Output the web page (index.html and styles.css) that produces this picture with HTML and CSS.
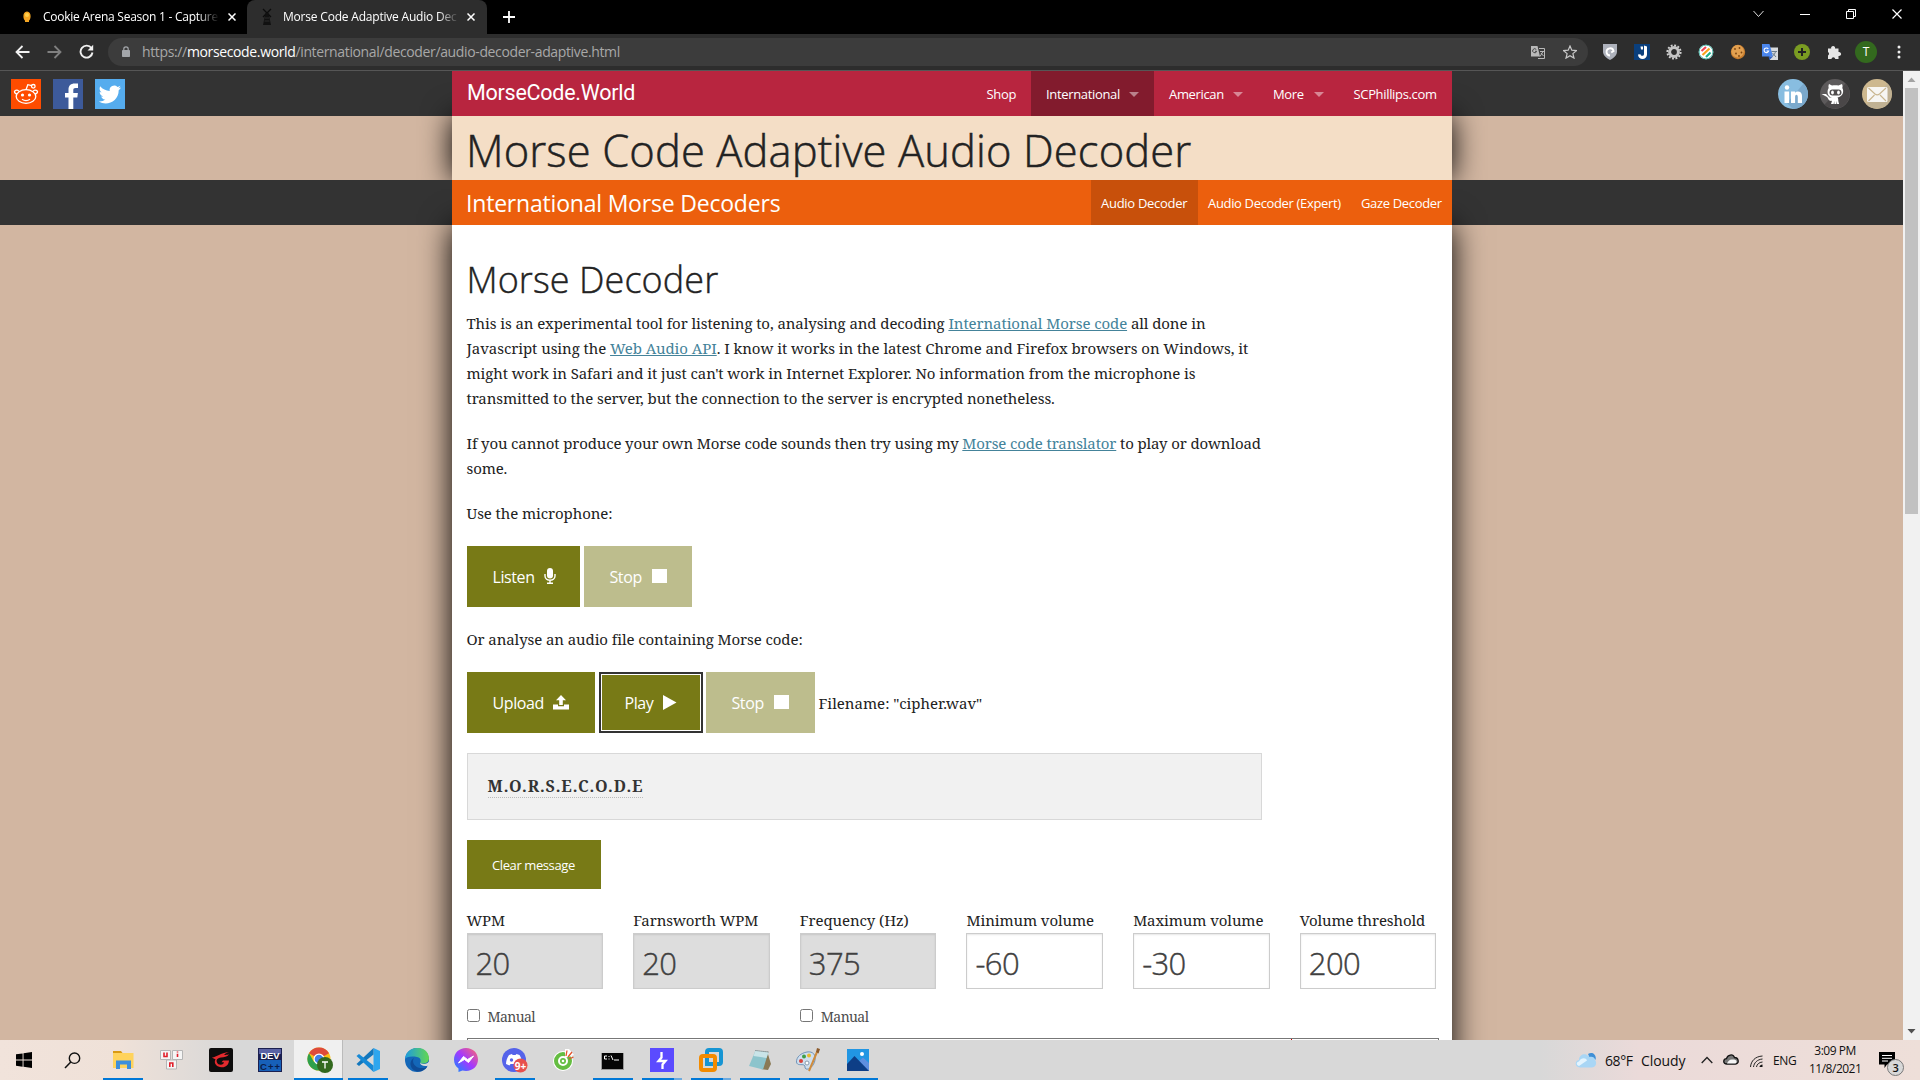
FILE: index.html
```
<!DOCTYPE html>
<html lang="en">
<head>
<meta charset="utf-8">
<title>Morse Code Adaptive Audio Decoder</title>
<link rel="stylesheet" href="styles.css">
</head>
<body>
<div class="tabs">
  <div class="tab">
    <svg class="fav" width="16" height="16" viewBox="0 0 16 16"><path d="M8 2.500c2.600 0 3.600 2.200 3.600 4.800 0 2.400-.8 3.700-1.600 4.200v1.500H6v-1.500c-.8-.5-1.600-1.800-1.600-4.200C4.400 4.700 5.400 2.500 8 2.500z" fill="#f5a623"/><circle cx="8" cy="6" r="2" fill="#ffd04d"/></svg>
    <span class="tab-title t1">Cookie Arena Season 1 - Capture</span>
    <svg width="8" height="8" viewBox="0 0 8 8"><path d="M.5.5l7 7M7.500.5l-7 7" stroke="#fff" stroke-width="1.500"/></svg>
  </div>
  <div class="tab active">
    <svg class="fav" width="16" height="18" viewBox="0 0 16 18"><path d="M4 1l8 8M12 1L4 9" stroke="#0c0c0c" stroke-width="1.300"/><path d="M6.500 5h3L12 17H4z" fill="#111"/><path d="M6 10h4M5.500 13h5" stroke="#333" stroke-width=".8"/></svg>
    <span class="tab-title t2">Morse Code Adaptive Audio Dec</span>
    <svg width="9" height="8" viewBox="0 0 9 8"><path d="M.5.5l7 7M7.500.5l-7 7" stroke="#fff" stroke-width="1.500"/></svg>
  </div>
  <svg class="plus" width="12" height="12" viewBox="0 0 12 12"><path d="M6 0v12M0 6h12" stroke="#fff" stroke-width="1.800"/></svg>
  <div class="winbtns">
    <svg width="11" height="12" viewBox="0 0 11 12"><path d="M.5 3l5 5.500 5-5.500" fill="none" stroke="#ddd"/></svg>
    <svg width="10" height="12" viewBox="0 0 10 12"><path d="M0 6.500h10" stroke="#fff"/></svg>
    <svg width="10" height="12" viewBox="0 0 10 12"><path d="M.5 3.500h7v7h-7zM2.500 3.500v-2h7v7h-2" fill="none" stroke="#fff"/></svg>
    <svg width="10" height="12" viewBox="0 0 10 12"><path d="M.5 1.500l9 9M9.500 1.500l-9 9" stroke="#fff" stroke-width="1.200"/></svg>
  </div>
</div>
<div class="toolbar">
  <div class="navbtns">
    <svg width="15" height="14" viewBox="0 0 15 14"><path d="M14.500 7H2M7.500 1L1.500 7l6 6" fill="none" stroke="#f1f1f1" stroke-width="1.800"/></svg>
    <svg width="15" height="14" viewBox="0 0 15 14"><path d="M.5 7H13M7.500 1l6 6-6 6" fill="none" stroke="#808080" stroke-width="1.800"/></svg>
    <svg width="15" height="15" viewBox="0 0 15 15"><path d="M12.500 4.200A6 6 0 1 0 13.500 8.500" fill="none" stroke="#f1f1f1" stroke-width="1.900"/><path d="M14.200.8v5.700H8.500z" fill="#f1f1f1"/></svg>
  </div>
  <div class="omni">
    <svg width="8" height="11" viewBox="0 0 8 11"><rect y="4" width="8" height="7" rx=".8" fill="#a3a6aa"/><path d="M1.800 4.500V3a2.200 2.200 0 0 1 4.400 0v1.500" fill="none" stroke="#a3a6aa" stroke-width="1.200"/></svg>
    <span class="url">https://<b>morsecode.world</b>/international/decoder/audio-decoder-adaptive.html</span>
    <svg width="14" height="14" viewBox="0 0 14 14"><path d="M0 1h6.500L9 11.500H0z" fill="#b9b9b9"/><path d="M8 3.500h5.500v10H7" fill="none" stroke="#b9b9b9"/><path d="M5.300 4.600A2 2 0 1 0 5.600 6.300H4" fill="none" stroke="#444"/><path d="M9 6.500h4M12 6.500l-3 5M10 8l2.500 3" stroke="#b9b9b9"/></svg>
    <svg width="14" height="14" viewBox="0 0 14 14"><path d="M7 1l1.800 4.200 4.600.4-3.500 3 1.100 4.500L7 10.700l-4 2.400 1.100-4.500-3.500-3 4.600-.4z" fill="none" stroke="#c8c8c8" stroke-width="1.200"/></svg>
  </div>
  <div class="exts">
    <svg viewBox="0 0 16 16"><path d="M1 0h14v7.500c0 4-3.500 6.500-7 8.500C4.500 14 1 11.500 1 7.500z" fill="#adb1bb"/><path d="M8 11.500A3.600 3.600 0 1 1 11.600 7L9.200 8.600" fill="none" stroke="#fff" stroke-width="1.800"/></svg>
    <svg viewBox="0 0 16 16"><path d="M0 0h16v16H0z" fill="#0a3f7d"/><path d="M6.500 2.500h2.500v3H7zM10 1.500l3 1v8a4.500 4.500 0 0 1-9 0l2.500-.3c.3 2.300 3.500 2.200 3.500-.3z" fill="#fff"/></svg>
    <svg viewBox="0 0 16 16"><circle cx="8" cy="8" r="6.600" fill="none" stroke="#d0d0d0" stroke-width="2" stroke-dasharray="1.900 1.550"/><circle cx="8" cy="8" r="4.400" fill="none" stroke="#c4c4c4" stroke-width="3"/></svg>
    <svg viewBox="0 0 16 16"><circle cx="8" cy="8" r="7.300" fill="#fff"/><circle cx="8" cy="8" r="6.900" fill="none" stroke="#2a9" stroke-width=".8"/><path d="M3.500 7L8 3" stroke="#ef4657" stroke-width="2.200"/><path d="M4.500 11l7-6.500" stroke="#f9a11b" stroke-width="2.200"/><path d="M8 13l4.500-4.500" stroke="#1cb28a" stroke-width="2.200"/></svg>
    <svg viewBox="0 0 16 16"><circle cx="8" cy="8" r="7.200" fill="#c87d2e"/><circle cx="7.600" cy="7.300" r="6.200" fill="#e2a050"/><g fill="#7b4310"><circle cx="5" cy="5" r=".9"/><circle cx="9.500" cy="4" r=".9"/><circle cx="11.500" cy="8.500" r=".9"/><circle cx="6" cy="9.500" r=".9"/><circle cx="9" cy="12" r=".9"/></g></svg>
    <svg viewBox="0 0 16 16"><path d="M6 3.500h10V16H8z" fill="#d7dadd"/><path d="M0 0h7.500l3.500 12.500H0z" fill="#4a86ee"/><path d="M7.500 16l3.500-3.500H6.500z" fill="#2f5fc0"/><path d="M6.300 5A2.300 2.300 0 1 0 6.600 7H4.500" fill="none" stroke="#fff" stroke-width="1.100"/><path d="M9.500 7.500H15M13.500 7.500c-.5 2.200-1.500 3.500-3 4.800M10.500 9l3.500 4" stroke="#6b7d8c" fill="none"/></svg>
    <svg viewBox="0 0 16 16"><circle cx="8" cy="8" r="8" fill="#7a9c22"/><path d="M8 4v8M4 8h8" stroke="#222" stroke-width="2"/></svg>
    <svg viewBox="0 0 16 16"><path d="M2 4.500h3.200a2 2 0 1 1 3.800 0h3.500v3.600a2 2 0 1 1 0 3.800v3H9.300a2 2 0 0 0-3.900 0H2v-3.500a2 2 0 0 0 0-3.500z" fill="#e6e6e6"/></svg>
  </div>
  <span class="avatar">T</span>
  <svg width="4" height="14" viewBox="0 0 4 14"><g fill="#eee"><circle cx="2" cy="2" r="1.500"/><circle cx="2" cy="7" r="1.500"/><circle cx="2" cy="12" r="1.500"/></g></svg>
</div>
<div class="viewport">
  <div class="page">
    <div class="band">
      <div class="social">
        <svg width="30" height="30" viewBox="0 0 30 30"><path d="M0 0h30v30H0z" fill="#ff4c00"/><g fill="none" stroke="#fff" stroke-width="1.300"><ellipse cx="15" cy="17.500" rx="9.800" ry="6.800"/><path d="M15 10.700l1.800-5 4 .9"/><circle cx="22.300" cy="7.300" r="1.800"/><path d="M5.800 15c-2-.5-3-2-1.800-3.200s3-.8 4 .5M24.200 15c2-.5 3-2 1.800-3.200s-3-.8-4 .5M11 20.300c2.500 1.700 5.500 1.700 8 0"/></g><circle cx="11.500" cy="16" r="1.600" fill="#fff"/><circle cx="18.500" cy="16" r="1.600" fill="#fff"/></svg>
        <svg width="30" height="30" viewBox="0 0 30 30"><path d="M0 0h30v30H0z" fill="#3d5a9a"/><path d="M15.500 30V18.500H12V14h3.500v-3.500C15.500 6.500 18 4.500 21.500 4.500H25V9h-2.300c-1.900 0-2.400.9-2.400 2.300V14h4.600l-.6 4.500h-4V30z" fill="#fff"/></svg>
        <svg width="30" height="30" viewBox="0 0 30 30"><path d="M0 0h30v30H0z" fill="#55acee"/><path d="M26 8.500c-.8.400-1.700.6-2.600.7.900-.5 1.600-1.400 2-2.400-.9.500-1.900.9-2.900 1.100a4.600 4.600 0 0 0-7.800 4.100C10.900 11.800 7.500 10 5.200 7.200c-1.200 2.100-.6 4.800 1.400 6.100-.7 0-1.400-.2-2-.6 0 2.200 1.500 4.200 3.600 4.600-.7.200-1.400.2-2 .1.600 1.800 2.300 3.100 4.200 3.200A9.200 9.200 0 0 1 3.700 22.500c8.500 5 20-.3 20-11.300 1-.7 1.700-1.600 2.300-2.700z" fill="#fff"/></svg>
      </div>
      <div class="nav">
        <span class="logo">MorseCode.World</span>
        <span class="ni w1">Shop</span>
        <span class="ni w2 on">International<i></i></span>
        <span class="ni w3">American<i></i></span>
        <span class="ni w4">More<i></i></span>
        <span class="ni w5">SCPhillips.com</span>
      </div>
      <div class="social right">
        <svg width="30" height="30" viewBox="0 0 30 30"><circle cx="15" cy="15" r="15" fill="#88bde0"/><path d="M25.600 4.400A15 15 0 0 1 15 30L9 24z" fill="#7ba9cc"/><circle cx="9" cy="8.500" r="2.200" fill="#fff"/><path d="M6.500 12.500h4.600V24H6.500zM13 12.500h4v1.300c2-2.300 7-1.900 7 3V24h-4.200v-6c0-3-2.700-2.800-2.700 0v6H13z" fill="#fff"/></svg>
        <svg width="30" height="30" viewBox="0 0 30 30"><circle cx="15" cy="15" r="15" fill="#5d5a5b"/><path d="M25.600 4.400A15 15 0 0 1 4.400 25.600z" fill="#4a4748"/><path d="M9 5l3 1.600c2-.5 4.500-.5 6.500 0L22 5c.8 2 .6 3 .3 4 2 3.500.7 8.500-4.800 9.500.8 1 .8 2 .8 3.500l.8 3h-2l-.5-3-.2 3h-2l-.2-3-.5 3H11l1-3.200c-3.500.5-3-1.500-5-3.800L1.500 15H6l3.500 3.500 2.500.5C7.500 17.500 6.500 12.500 8.700 9c-.4-1.300-.3-2.500.3-4z" fill="#fff"/><rect x="9.500" y="10.500" width="12" height="6" rx="3" fill="#514e4f"/><ellipse cx="12.500" cy="13.500" rx="1.400" ry="2" fill="#fff"/><ellipse cx="18.500" cy="13.500" rx="1.400" ry="2" fill="#fff"/></svg>
        <svg width="30" height="30" viewBox="0 0 30 30"><circle cx="15" cy="15" r="15" fill="#cdb88f"/><path d="M25.600 4.400A15 15 0 0 1 4.400 25.600z" fill="#c0b193"/><rect x="5" y="8" width="20.500" height="15" rx="1.500" fill="#f7f6f3"/><path d="M6.500 9l6.500 6c1.500 1.200 3 1.200 4.500 0L24 9M6.500 22l6-6M24 22l-6-6" fill="none" stroke="#c9b68f" stroke-width="1.100"/></svg>
      </div>
    </div>
    <h1>Morse Code Adaptive Audio Decoder</h1>
    <div class="band">
      <div></div>
      <div class="nav sub">
        <span class="subtitle">International Morse Decoders</span>
        <span class="si s1 on">Audio Decoder</span>
        <span class="si s2">Audio Decoder (Expert)</span>
        <span class="si s3">Gaze Decoder</span>
      </div>
    </div>
    <div class="content">
      <h2>Morse Decoder</h2>
      <p>This is an experimental tool for listening to, analysing and decoding <a>International Morse code</a> all done in<br><span class="l2">Javascript using the <a>Web Audio API</a>. I know it works in the latest Chrome and Firefox browsers on Windows, it</span><br>might work in Safari and it just can't work in Internet Explorer. No information from the microphone is<br>transmitted to the server, but the connection to the server is encrypted nonetheless.</p>
      <p class="p2">If you cannot produce your own Morse code sounds then try using my <a>Morse code translator</a> to play or download<br>some.</p>
      <p>Use the microphone:</p>
      <div class="row">
        <span class="btn b1">Listen<svg width="12" height="16" viewBox="0 0 12 16"><rect x="3" width="6" height="10.500" rx="3" fill="#fff"/><path d="M1 6v2c0 5.500 10 5.500 10 0V6M6 12v3M3 15.200h6" fill="none" stroke="#fff" stroke-width="1.400"/></svg></span>
        <span class="btn b2 off">Stop<svg width="15" height="14" viewBox="0 0 15 14"><path d="M0 0h15v14H0z" fill="#fff"/></svg></span>
      </div>
      <p>Or analyse an audio file containing Morse code:</p>
      <div class="row">
        <span class="btn b3">Upload<svg width="16" height="15" viewBox="0 0 16 15"><path d="M8 0l5 5.200H9.800V10H6.200V5.200H3zM0 9.500h5v1.700h6V9.500h5V14.500H0z" fill="#fff"/></svg></span>
        <span class="btn b4">Play<svg width="14" height="15" viewBox="0 0 14 15"><path d="M0 0l13.500 7.500L0 15z" fill="#fff"/></svg></span>
        <span class="btn b5 off">Stop<svg width="15" height="14" viewBox="0 0 15 14"><path d="M0 0h15v14H0z" fill="#fff"/></svg></span>
        <span class="file">Filename: "cipher.wav"</span>
      </div>
      <div class="msg"><b>M.O.R.S.E.C.O.D.E</b></div>
      <span class="btn small">Clear message</span>
      <div class="fields">
        <div><label>WPM</label><div class="in dis">20</div><div class="chk"><i></i>Manual</div></div>
        <div><label>Farnsworth WPM</label><div class="in dis">20</div></div>
        <div><label>Frequency (Hz)</label><div class="in dis">375</div><div class="chk"><i></i>Manual</div></div>
        <div><label>Minimum volume</label><div class="in">-60</div></div>
        <div><label>Maximum volume</label><div class="in">-30</div></div>
        <div><label>Volume threshold</label><div class="in">200</div></div>
      </div>
      <div class="graph"><i></i></div>
    </div>
  </div>
  <div class="scroll">
    <svg width="17" height="17" viewBox="0 0 17 17"><path d="M4.500 11l4-4.500 4 4.500z" fill="#a3a3a3"/></svg>
    <div class="thumb"></div>
    <svg width="17" height="17" viewBox="0 0 17 17"><path d="M4.500 6l4 4.500 4-4.500z" fill="#505050"/></svg>
  </div>
</div>
<div class="taskbar">
  <div class="tb"><svg width="16" height="16" viewBox="0 0 16 16"><path d="M0 2.300L6.600 1.400v6.200H0zM7.500 1.200L16 0v7.600H7.500zM0 8.500h6.600v6.200L0 13.700zM7.500 8.500H16V16l-8.500-1.200z" fill="#000"/></svg></div>
  <div class="tb"><svg width="17" height="17" viewBox="0 0 17 17"><circle cx="10.500" cy="6.200" r="5.200" fill="none" stroke="#111" stroke-width="1.400"/><path d="M6.800 10L1 16" stroke="#111" stroke-width="1.500"/></svg></div>
  <div class="tb u"><svg width="22" height="18" viewBox="0 0 22 18"><path d="M1 0h8l1.500 2H1z" fill="#d99a13"/><path d="M1 2h20.500v15H1z" fill="#ffd35c"/><path d="M4 18V9.500h15V18h-4v-4.500H8V18z" fill="#3d8fdc"/></svg></div>
  <div class="tb"><svg width="24" height="20" viewBox="0 0 24 20"><g fill="#f5f5f5" stroke="#b5b5b5"><path d="M.5.5h10v9H.5zM12.500.5h10v9h-10zM6.500 10h10v9h-10z"/></g><g stroke="#e11f2b" stroke-width="1.600" fill="none"><path d="M4 2.500v4h3v-4M17.500 3.700v3.300M17.500 1.500v1M9.800 17v-4h3v4"/></g></svg></div>
  <div class="tb"><svg width="24" height="24" viewBox="0 0 24 24"><rect width="24" height="24" rx="2" fill="#0d0d0d"/><path d="M3 9.500C8 9 11 5 20 4c-3 1.200-4.500 2-5 2.800 2 .3 4-.2 5-.3-2 2.300-5 2.600-8 3-4 .6-5 2.500-4 5 1 2.500 4.500 3 6.500 1l.5-1.200h-2.500l1.500-1.800h6c-.5 5-3.500 7-7.500 6.700C8 19 5 16 6 12.500l.5-1.200c-1-.4-2-.8-3.500-1.800z" fill="#e32a2e"/></svg></div>
  <div class="tb"><svg width="24" height="24" viewBox="0 0 24 24"><path d="M0 0h24v24H0z" fill="#1b2050"/><path d="M1 12h22v11H1z" fill="#1760b8"/><path d="M1 1h22v5H1z" fill="#5a62a5"/><text x="2.500" y="11" textLength="19" class="dev">DEV</text><text x="2" y="21.500" textLength="20" class="dev cpp">C++</text></svg></div>
  <div class="tb u cur"><svg width="26" height="26" viewBox="0 0 26 26"><circle cx="12" cy="12" r="11.500" fill="#fbc116"/><path d="M12 12L2 6.200A11.500 11.500 0 0 1 22 6.200z" fill="#de4b3b"/><path d="M2 6.200A11.500 11.500 0 0 0 12 23.500l5-8.500L7 15z" fill="#2ea04c"/><circle cx="12" cy="12" r="5.500" fill="#fff"/><circle cx="12" cy="12" r="4.300" fill="#4080e8"/><circle cx="18" cy="18" r="8" fill="#33691e"/><path d="M15 15h6M18 15v6.500" stroke="#fff" stroke-width="1.300"/></svg></div>
  <div class="tb u"><svg width="24" height="24" viewBox="0 0 24 24"><path d="M17.500 0L24 3v18l-6.500 3z" fill="#2ea6ee"/><path d="M17.500 0v6.500L3 18 .5 16z" fill="#1277bd"/><path d="M17.500 24v-6.500L3 6 .5 8z" fill="#1689d6"/></svg></div>
  <div class="tb"><svg width="24" height="24" viewBox="0 0 24 24"><defs><linearGradient id="eg" x1="0" x2="1"><stop offset="0" stop-color="#1e9ae0"/><stop offset="1" stop-color="#63d84f"/></linearGradient></defs><circle cx="12" cy="12" r="12" fill="#1467b8"/><path d="M0 11C1-3.500 23-4 24 10c0 5-5 6.500-9 5 1.500-2.500.5-5.500-3-6C6 8 1 9 0 11z" fill="url(#eg)"/><path d="M9 10c-3 4 1 11 9 10 2 0 3-.7 4.500-1.500-5 8-16 6-17-2C5.200 13.500 7 11 9 10z" fill="#0f4c97"/><path d="M24.500 12c-.5 4-5.500 5-9.500 3 0 2 4 4 8.500 2.500 1-1.500 1.300-3.500 1-5.500z" fill="#dadada"/></svg></div>
  <div class="tb"><svg width="24" height="24" viewBox="0 0 24 24"><defs><linearGradient id="mg" x1="0" y1="1" x2="1" y2="0"><stop offset="0" stop-color="#0a8cff"/><stop offset=".5" stop-color="#a338ff"/><stop offset="1" stop-color="#ff6a6a"/></linearGradient></defs><path d="M12 0c7 0 12 5 12 11.500S19 23 12 23c-1.500 0-2.500-.2-3.500-.5L4.500 24v-3.500C1.500 18.500 0 15.500 0 11.500 0 5 5 0 12 0z" fill="url(#mg)"/><path d="M4.500 15L9.500 8.500l4 3L19.500 8l-5 6.500-4-3z" fill="#fff" stroke="#fff"/></svg></div>
  <div class="tb u"><svg width="26" height="25" viewBox="0 0 26 25"><circle cx="12" cy="12" r="12" fill="#5563ea"/><path d="M7 7l3-1 .6 1h3L14.500 6l3 1c2 3 2.500 6 2.500 9l-3.500 1.500-1-1.500h-7l-1 1.500L4 16c0-3 1-6 3-9z" fill="#fff"/><circle cx="9.500" cy="12" r="1.700" fill="#5563ea"/><circle cx="18.500" cy="17.500" r="7" fill="#e8504d"/><text x="12.800" y="21.500" class="nine">9+</text></svg></div>
  <div class="tb"><svg width="22" height="22" viewBox="0 0 22 22"><circle cx="10" cy="12" r="7.500" fill="none" stroke="#fff" stroke-width="5"/><circle cx="10" cy="12" r="7" fill="#fff" stroke="#65bd42" stroke-width="4"/><circle cx="10" cy="12" r="3" fill="#65bd42"/><circle cx="10" cy="12" r="1.300" fill="#fff"/><path d="M12 9V0h4l5 6z" fill="#fff"/><path d="M13 7l1-5.500M15 8l4-5M16 10l4.500-2" stroke="#e6532c" stroke-width="1.300"/></svg></div>
  <div class="tb u"><svg width="23" height="19" viewBox="0 0 23 19"><path d="M0 0h23v19H0z" fill="#999"/><path d="M1 2h21v16H1z" fill="#050505"/><path d="M0 0h23v2H0z" fill="#d5d5d5"/><path d="M6 5H3.500v3H6M8 5v1M8 7.500v1M10 4.500l2 4.500M13 9h5" fill="none" stroke="#fff"/></svg></div>
  <div class="tb u m"><svg width="24" height="24" viewBox="0 0 24 24"><path d="M0 0h24v24H0z" fill="#5b4bff"/><path d="M11.500 4v5.500L8.500 13h7L12.500 16.500V21" fill="none" stroke="#fff" stroke-width="2.300"/></svg></div>
  <div class="tb u m"><svg width="24" height="24" viewBox="0 0 24 24"><rect x="8" y="2" width="14" height="14" rx="2" fill="none" stroke="#1695d3" stroke-width="4"/><rect x="2" y="8" width="14" height="14" rx="2" fill="none" stroke="#f38b00" stroke-width="4"/><path d="M8 10v6h6" fill="none" stroke="#1695d3" stroke-width="4"/></svg></div>
  <div class="tb u"><svg width="24" height="22" viewBox="0 0 24 22"><path d="M19 2l4 13-3 6-7-1z" fill="#8a7a55"/><path d="M7.500 1.500L20.500 3 15 20.500 1 17z" fill="#8cc4cc"/><path d="M7.500 1.500L20.500 3l-2 6-13-2z" fill="#c9e4e8"/><path d="M7.500 1.500L20.500 3" stroke="#666" stroke-dasharray="1 1"/></svg></div>
  <div class="tb u"><svg width="25" height="24" viewBox="0 0 25 24"><path d="M11 4c6-1 9 3 8 8-1 6-6 10-9 9-2-1 0-3-2-4s-7 1-7.500-3C.3 9 5 5 11 4z" fill="#cfdfee" stroke="#6f93b8"/><circle cx="5" cy="13" r="2" fill="#d8433a"/><circle cx="8" cy="8.500" r="2" fill="#3f9e48"/><circle cx="13" cy="7.500" r="2" fill="#e8b92f"/><circle cx="11" cy="15" r="2" fill="#fff" stroke="#89a"/><path d="M21 4L13 23" stroke="#cf8b3c" stroke-width="2"/><path d="M20 4l1-4 3 1-1.500 4.500z" fill="#8c5a2b"/></svg></div>
  <div class="tb u"><svg width="22" height="22" viewBox="0 0 22 22"><path d="M0 0h22v22H0z" fill="#2196e3"/><circle cx="15" cy="5" r="2" fill="#fff"/><path d="M10 14l6-5.500 6 5.500v8h-8z" fill="#5f8fe0"/><path d="M0 15L7.500 7 22 22H0z" fill="#0d3e86"/></svg></div>
  <div class="tray">
    <svg width="22" height="16" viewBox="0 0 22 16"><path d="M5 15.500c-5 0-6-6.500-1-7.500C4 2 11 1 13 4c4-3 8 0 7 4 2 2 1.500 7-3 7.500z" fill="#a9d6f5"/><path d="M13 2c4-3 9 .5 7.500 6-1-3-3.500-4-6-3z" fill="#3f8fd6"/><path d="M4 14c-3-1-3-4 0-4.500 2-4 7-4 8-1" fill="#e4f4fe"/></svg>
    <span class="t68">68°F</span><span class="cl">Cloudy</span>
    <svg class="chev" width="12" height="8" viewBox="0 0 12 8"><path d="M.7 7L6 1.500 11.300 7" fill="none" stroke="#222" stroke-width="1.300"/></svg>
    <svg class="od" width="16" height="11" viewBox="0 0 16 11"><path d="M4 10C-.5 10 0 5 3.500 4.700 4.500.5 10-.5 11.500 3.500 16 3.500 16.500 10 12.500 10z" fill="#777" stroke="#111" stroke-width="1.300"/><path d="M4 9.500C5 7 7 5 9.500 5.500 13 5 15 7.500 12.500 9.500z" fill="#f5f5f5"/></svg>
    <svg class="wf" width="13" height="13" viewBox="0 0 13 13"><g fill="none" stroke="#222"><path d="M.5 12C1 6 5 1.500 12.500 1M3.500 12c.5-4 3.500-7.500 9-8M6.500 12c.3-2.500 2.500-4.800 6-5"/></g><path d="M9.500 12c0-1.500 1.500-2.500 3-2.500V12z" fill="#111"/></svg>
    <span class="eng">ENG</span>
    <span class="clock">3:09 PM<br>11/8/2021</span>
    <span class="note"><svg width="16" height="16" viewBox="0 0 16 16"><path d="M0 0h16v12.500H8L5.500 16v-3.500H0z" fill="#000"/><path d="M3 3.500h10M3 6.300h10M3 9h6" stroke="#fff"/></svg><em>3</em></span>
  </div>
</div>
</body>
</html>
```
FILE: styles.css
```
* { box-sizing: border-box; }
html, body { margin: 0; height: 1080px; overflow: hidden; }
body { display: flex; flex-direction: column; width: 1920px; font-family: "Open Sans", "Noto Sans", sans-serif; background: #fff; }
svg { display: block; flex: none; }

/* browser chrome */
.tabs { display: flex; height: 34px; background: #000; align-items: center; color: #fff; font-size: 12px; letter-spacing: -.2px; }
.tab { display: flex; align-items: center; height: 34px; width: 247px; padding-left: 19px; }
.tab.active { background: #2d2d2d; border-radius: 8px 8px 0 0; width: 240px; padding-left: 12px; }
.fav { margin-right: 8px; }
.tab-title { white-space: nowrap; line-height: 20px; -webkit-mask-image: linear-gradient(90deg, #000 88%, transparent); mask-image: linear-gradient(90deg, #000 88%, transparent); }
.t1 { width: 176px; margin-right: 9px; letter-spacing: -.25px; }
.t2 { width: 176px; margin-right: 8px; }
.plus { margin-left: 16px; }
.winbtns { display: flex; gap: 36px; margin-left: auto; padding-right: 18px; margin-bottom: 6px; align-items: center; }
.toolbar { display: flex; align-items: center; height: 37px; padding-bottom: 1px; background: #2d2d2d; border-bottom: 1px solid #565656; }
.navbtns { display: flex; gap: 17px; padding-left: 14.500px; width: 108px; align-items: center; }
.omni { display: flex; align-items: center; width: 1480px; height: 28px; border-radius: 14px; background: #3c3c3c; padding: 0 11px 0 14px; }
.url { flex: 1; margin-left: 12px; font-size: 14px; letter-spacing: -.36px; color: #a8a8a8; line-height: 20px; }
.url b { font-weight: 400; color: #fff; }
.omni svg + svg { margin-left: 18px; }
.exts { display: flex; gap: 16px; margin-left: 14px; }
.exts svg { width: 16px; height: 16px; }
.avatar { width: 22px; height: 22px; border-radius: 50%; background: #33691e; color: #fff; font-size: 12px; line-height: 22px; text-align: center; margin: 0 20px 0 13px; }

/* web page */
.viewport { display: flex; height: 969px; overflow: hidden; flex: none; }
.page { width: 1903px; background: #d2b6a1; overflow: hidden; }
.band { display: grid; grid-template-columns: 452px 1000px 451px; height: 45px; background: #333; }
.social { display: flex; gap: 12px; padding: 8px 11px; }
.social.right { justify-content: flex-end; }
.nav { display: flex; height: 45px; background: #b8253f; color: #fff; font-size: 13px; letter-spacing: -.34px; line-height: 46px; position: relative; white-space: nowrap; }
.logo { font: 21.500px/43px Roboto, sans-serif; letter-spacing: -.25px; flex: 1; padding-left: 15px; }
.ni { padding-left: 15px; display: flex; align-items: center; justify-content: space-between; padding-right: 15px; }
.ni i { border: 5px solid transparent; border-top-color: rgba(255,255,255,.45); border-bottom: 0; margin-top: 1px; }
.w1 { width: 59px; } .w2 { width: 123px; } .w3 { width: 104px; } .w4 { width: 81px; } .w5 { width: 113px; padding-right: 0; }
.w1, .w5 { padding-left: 14.500px; }
.ni.on { background: #821b2d; }
.sub { background: #ec5f0d; }
.subtitle { flex: 1; padding-left: 14px; font-size: 23px; letter-spacing: -.2px; }
.si { padding-left: 10px; }
.si.on { background: #c8500b; letter-spacing: -.28px; }
.s1 { width: 107px; } .s2 { width: 153px; } .s3 { width: 101px; }
h1 { width: 1000px; height: 64px; margin: 0 0 0 452px; padding: 2px 0 0 14px; background: #f4dec6; box-shadow: 0 0 30px #000; color: #222; font-size: 43.500px; font-weight: 300; line-height: 66px; letter-spacing: .12px; white-space: nowrap; -webkit-text-stroke: .5px #222; }
.content { width: 1000px; height: 860px; margin-left: 452px; padding: 29px 15px 0 14.500px; background: #fff; box-shadow: 0 0 30px #000; color: #222; font: 15px/25px "Noto Serif", "Liberation Serif", serif; letter-spacing: -.09px; }
h2 { margin: 0 0 6px; padding-top: 1px; font: 300 36px/50px "Open Sans", sans-serif; letter-spacing: .08px; -webkit-text-stroke: .4px #222; }
p { margin: 0 0 20px; white-space: nowrap; }
.l2 { letter-spacing: -.06px; }
.p2 { letter-spacing: -.13px; }
a { color: #44839a; text-decoration: underline; }
.row { display: flex; gap: 4px; align-items: center; margin-bottom: 20px; }
.btn { display: flex; align-items: center; height: 61px; padding-left: 26px; background: #787a16; color: #fff; font: 16px/24px "Open Sans", sans-serif; letter-spacing: -.4px; }
.btn svg { margin: -1px 0 0 9.500px; }
.btn.off { background: #bdbd8d; }
.btn.off svg { margin-left: 10px; }
.b1 { width: 113px; } .b2 { width: 108px; } .b3 { width: 128px; } .b4 { width: 104px; border: 2px solid #333; box-shadow: inset 0 0 0 1px #fff; padding-left: 24px; } .b5 { width: 109px; margin-left: -1px; }
.file { letter-spacing: 0; padding-top: 1px; }
.msg { width: 795px; height: 67px; margin-bottom: 20px; padding: 20px; border: 1px solid #d8d8d8; background: #f1f1f1; color: #333; }
.msg b { display: inline-block; font-size: 16px; line-height: 22px; padding-top: 1px; border-bottom: 1px dotted #bbb; letter-spacing: .9px; }
.small { width: 134px; height: 49px; padding-left: 25.500px; font-size: 13px; margin-bottom: 19px; }
.fields { display: grid; grid-template-columns: repeat(6, 136.670px); gap: 30px; height: 130px; white-space: nowrap; }
label { display: block; }
.in { height: 56px; border: 1px solid #ccc; box-shadow: inset 0 1px 2px rgba(0,0,0,.1); padding-left: 8px; color: #404040; font: 300 31px/58px "Open Sans", sans-serif; letter-spacing: -.6px; -webkit-text-stroke: .4px #404040; }
.dis { background: #ddd; }
.chk { display: flex; align-items: center; gap: 8px; margin-top: 15px; font-size: 14px; letter-spacing: -.6px; color: #4d4d4d; }
.chk i { width: 13px; height: 13px; border: 1px solid #767676; border-radius: 2.500px; background: #fff; margin-top: -2px; }
.graph { width: 972px; height: 150px; border: 1px solid #777; padding-left: 823px; }
.graph i { display: block; width: 1px; height: 100%; background: #c00; }
.scroll { width: 17px; background: #f1f1f1; display: flex; flex-direction: column; }
.thumb { width: 13px; height: 426px; margin: 0 2px auto; background: #c1c1c1; }

/* taskbar */
.taskbar { display: flex; height: 40px; flex: none; background: linear-gradient(90deg, #f1e3db 0, #efe1d8 120px, #d8d8d8 230px, #d8d8d8 1540px, #ebdad9 1640px, #eedfd9 1920px); color: #111; }
.tb { width: 49px; flex: none; display: flex; align-items: center; justify-content: center; border-bottom: 2px solid transparent; padding-top: 2px; }
.tb:first-child { padding-right: 1px; }
.tb:nth-child(2) { padding-right: 2px; }
.tb.u { background: linear-gradient(#0078d7, #0078d7) 50% 100% / 40px 2px no-repeat border-box; }
.tb.cur { background: linear-gradient(#0078d7, #0078d7) 0 100% / 100% 2px no-repeat border-box, #f0f0f0; box-shadow: inset -1px 0 #bbb; padding-left: 2px; }
.tb.m { background: linear-gradient(90deg, #0078d7 80%, #6cabe0 80%) 50% 100% / 40px 2px no-repeat border-box; }
.dev { font: bold 9.500px "Liberation Sans", sans-serif; fill: #fff; }
.cpp { fill: #0a1c48; }
.nine { font: bold 10px "Open Sans", sans-serif; fill: #fff; }
.tray { display: flex; align-items: center; margin-left: auto; padding-right: 17px; font-size: 14px; letter-spacing: -.4px; white-space: nowrap; }
.t68 { width: 36px; margin-left: 8px; margin-top: 1px; }
.cl { width: 60px; margin-top: 1px; letter-spacing: -.1px; }
.od { margin-left: 10px; margin-top: -1px; }
.wf { margin-left: 11px; margin-top: 2px; }
.eng { width: 24px; font-size: 12px; margin-left: 10px; }
.clock { width: 52px; margin-left: 12px; font-size: 12px; line-height: 18px; text-align: center; letter-spacing: -.5px; }
.note { position: relative; margin-left: 18px; width: 24px; }
.note em { position: absolute; left: 8px; top: 7px; width: 17px; height: 17px; border: 1px solid #777; border-radius: 50%; background: #d8d8d8; font: 600 11px/15px "Open Sans", sans-serif; text-align: center; }
```
